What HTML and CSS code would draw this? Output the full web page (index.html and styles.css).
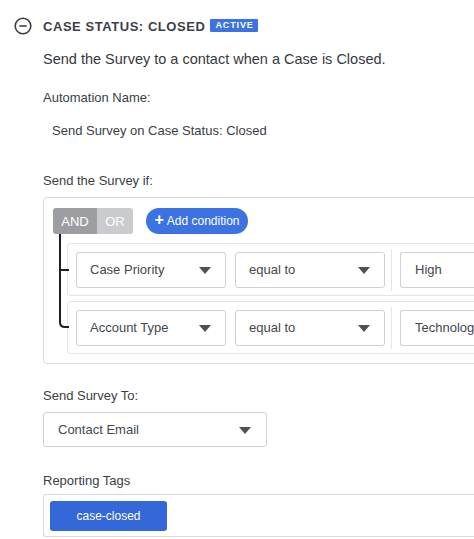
FILE: index.html
```html
<!DOCTYPE html>
<html>
<head>
<meta charset="utf-8">
<link rel="stylesheet" href="styles.css">
</head>
<body>
<div class="page">
  <div class="header">
    <svg class="collapse-icon" width="18" height="18" viewBox="0 0 18 18">
      <circle cx="9" cy="9" r="7.8" fill="none" stroke="#3a3d42" stroke-width="1.6"/>
      <line x1="5.3" y1="9" x2="12.7" y2="9" stroke="#3a3d42" stroke-width="1.6"/>
    </svg>
    <span class="title">CASE STATUS: CLOSED</span>
    <span class="badge">ACTIVE</span>
  </div>
  <div class="content">
    <p class="description">Send the Survey to a contact when a Case is Closed.</p>

    <div class="label label-name">Automation Name:</div>
    <div class="name-value">Send Survey on Case Status: Closed</div>

    <div class="label label-if">Send the Survey if:</div>
    <div class="conditions">
      <svg class="connector" width="12" height="96" viewBox="0 0 12 96">
        <path d="M3 0 V88 Q3 93 8 93 H12" fill="none" stroke="#1e1e1e" stroke-width="2"/>
        <path d="M3 36 H12" fill="none" stroke="#1e1e1e" stroke-width="2"/>
      </svg>
      <div class="toolbar">
        <div class="toggle">
          <span class="toggle-and">AND</span>
          <span class="toggle-or">OR</span>
        </div>
        <button class="add-btn"><span class="plus">+</span>Add condition</button>
      </div>
      <div class="rows">
        <div class="cond-row">
          <div class="select"><span>Case Priority</span><i class="caret"></i></div>
          <div class="select"><span>equal to</span><i class="caret"></i></div>
          <div class="sep"></div>
          <div class="value">High</div>
        </div>
        <div class="cond-row">
          <div class="select"><span>Account Type</span><i class="caret"></i></div>
          <div class="select"><span>equal to</span><i class="caret"></i></div>
          <div class="sep"></div>
          <div class="value">Technology</div>
        </div>
      </div>
    </div>

    <div class="label label-to">Send Survey To:</div>
    <div class="select select-wide"><span>Contact Email</span><i class="caret"></i></div>

    <div class="label label-tags">Reporting Tags</div>
    <div class="tags">
      <span class="tag">case-closed</span>
    </div>
  </div>
</div>
</body>
</html>
```

FILE: styles.css
```css
html, body {
  margin: 0;
  padding: 0;
  background: #ffffff;
  overflow: hidden;
}
body {
  font-family: "Liberation Sans", Arial, sans-serif;
  color: #3b3e43;
  width: 474px;
  height: 539px;
}
.page {
  padding-top: 17px;
}
.header {
  display: flex;
  align-items: center;
  height: 18px;
  padding-left: 14px;
}
.collapse-icon {
  display: block;
  margin-right: 11px;
}
.title {
  font-size: 13px;
  font-weight: bold;
  letter-spacing: 0.55px;
  color: #3d4046;
}
.badge {
  margin-left: 5px;
  background: #3d72e3;
  color: #fff;
  font-size: 9px;
  font-weight: bold;
  letter-spacing: 0.9px;
  height: 13px;
  line-height: 13px;
  padding: 0 4px 0 5px;
  border-radius: 1px;
  position: relative;
  top: -0.5px;
}
.content {
  padding-left: 43px;
}
.description {
  margin: 0;
  margin-top: 15px;
  font-size: 14.5px;
  line-height: 18px;
  color: #35383d;
}
.label {
  font-size: 13px;
  line-height: 16px;
  color: #3b3e43;
}
.label-name {
  margin-top: 22px;
}
.name-value {
  font-size: 13px;
  line-height: 16px;
  margin-top: 17px;
  padding-left: 9px;
  color: #3b3e43;
}
.label-if {
  margin-top: 34px;
}
.conditions {
  position: relative;
  margin-top: 8px;
  width: 480px;
  border: 1px solid #d9dadc;
  border-radius: 4px;
  padding: 10px 0 9px 9px;
  box-sizing: border-box;
}
.connector {
  position: absolute;
  left: 13px;
  top: 36px;
}
.toolbar {
  display: flex;
  align-items: center;
}
.toggle {
  display: flex;
  height: 26px;
  border-radius: 3px;
  overflow: hidden;
  font-size: 13px;
  color: #ffffff;
}
.toggle-and {
  background: #9c9ea2;
  width: 44px;
  display: flex;
  align-items: center;
  justify-content: center;
}
.toggle-or {
  background: #c9cbce;
  width: 36px;
  display: flex;
  align-items: center;
  justify-content: center;
}
.add-btn {
  margin-left: 13px;
  height: 26px;
  width: 102px;
  border: none;
  border-radius: 13px;
  background: #3d72e3;
  color: #fff;
  font-family: "Liberation Sans", Arial, sans-serif;
  font-size: 12px;
  display: flex;
  align-items: center;
  justify-content: center;
  padding: 0;
}
.plus {
  font-weight: bold;
  font-size: 16px;
  margin-right: 3px;
  line-height: 1;
  position: relative;
  top: -1px;
}
.rows {
  margin-top: 9px;
  margin-left: 14px;
  display: flex;
  flex-direction: column;
  gap: 5px;
}
.cond-row {
  display: flex;
  align-items: center;
  height: 53px;
  border: 1px solid #e4e5e7;
  border-right: none;
  border-radius: 4px 0 0 4px;
  padding-left: 8px;
  box-sizing: border-box;
}
.select {
  display: flex;
  align-items: center;
  justify-content: space-between;
  width: 150px;
  height: 36px;
  border: 1px solid #cfd1d4;
  border-radius: 3px;
  box-sizing: border-box;
  padding: 0 14px 0 13px;
  font-size: 13px;
  color: #44474c;
  background: #fff;
  margin-right: 9px;
}
.cond-row .select:nth-child(2) {
  margin-right: 0;
}
.caret {
  width: 0;
  height: 0;
  border-left: 6px solid transparent;
  border-right: 6px solid transparent;
  border-top: 7px solid #4d5055;
  margin-top: 2px;
}
.sep {
  width: 1px;
  height: 42px;
  background: #e4e5e7;
  margin: 0 8px 0 6px;
}
.value {
  display: flex;
  align-items: center;
  width: 120px;
  height: 36px;
  border: 1px solid #cfd1d4;
  border-right: none;
  border-radius: 3px 0 0 3px;
  box-sizing: border-box;
  padding-left: 14px;
  font-size: 13px;
  color: #44474c;
  white-space: nowrap;
  overflow: hidden;
}
.label-to {
  margin-top: 24px;
}
.select-wide {
  margin-top: 8px;
  width: 224px;
  height: 35px;
  padding: 0 15px 0 14px;
}
.label-tags {
  margin-top: 26px;
}
.tags {
  margin-top: 5px;
  width: 440px;
  height: 43px;
  border: 1px solid #d9dadc;
  border-right: none;
  border-radius: 3px 0 0 3px;
  box-sizing: border-box;
  padding: 6px 0 0 6px;
}
.tag {
  display: flex;
  align-items: center;
  justify-content: center;
  width: 117px;
  height: 30px;
  background: #3468d8;
  color: #fff;
  font-size: 12px;
  border-radius: 3px;
}
```
